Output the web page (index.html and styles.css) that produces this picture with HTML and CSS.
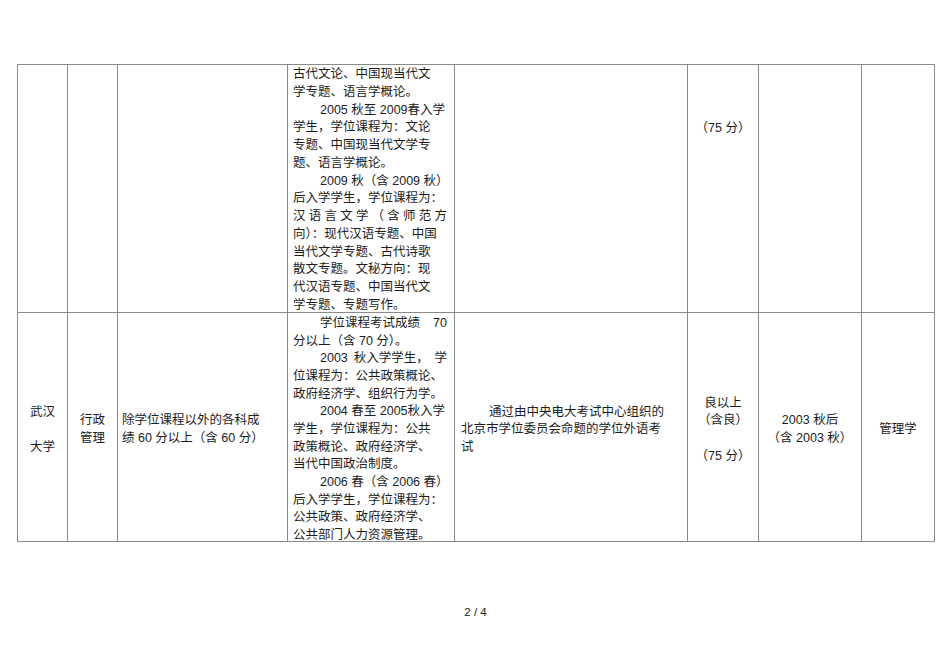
FILE: index.html
```html
<!DOCTYPE html>
<html lang="zh">
<head>
<meta charset="utf-8">
<link rel="stylesheet" href="styles.css">
</head>
<body>
<div class="page">
<table class="grid">
<colgroup>
<col class="c1"><col class="c2"><col class="c3"><col class="c4"><col class="c5"><col class="c6"><col class="c7"><col class="c8">
</colgroup>
<tr class="r1">
<td></td>
<td></td>
<td></td>
<td class="courses top">
<div class="body b1">
<div class="ln">古代文论、中国现当代文</div>
<div class="ln">学专题、语言学概论。</div>
<div class="ln in">2005 秋至 2009春入学</div>
<div class="ln">学生，学位课程为：文论</div>
<div class="ln">专题、中国现当代文学专</div>
<div class="ln">题、语言学概论。</div>
<div class="ln in">2009 秋（含 2009 秋）</div>
<div class="ln">后入学学生，学位课程为：</div>
<div class="ln j">汉语言文学（含师范方</div>
<div class="ln">向）：现代汉语专题、中国</div>
<div class="ln">当代文学专题、古代诗歌</div>
<div class="ln">散文专题。文秘方向：现</div>
<div class="ln">代汉语专题、中国当代文</div>
<div class="ln">学专题、专题写作。</div>
</div>
</td>
<td></td>
<td class="center score-top"><div class="ln">（75 分）</div></td>
<td></td>
<td></td>
</tr>
<tr class="r2">
<td class="center mid"><div class="ln">武汉</div><div class="ln">&nbsp;</div><div class="ln">大学</div></td>
<td class="center mid"><div class="ln">行政</div><div class="ln">管理</div></td>
<td class="left mid"><div class="ln">除学位课程以外的各科成</div><div class="ln">绩 60 分以上（含 60 分）</div></td>
<td class="courses top">
<div class="body b2">
<div class="ln in spread"><span>学位课程考试成绩</span><span>70</span></div>
<div class="ln">分以上（含 70 分）。</div>
<div class="ln in spread"><span>2003</span><span>秋入学学生，</span><span>学</span></div>
<div class="ln">位课程为：公共政策概论、</div>
<div class="ln">政府经济学、组织行为学。</div>
<div class="ln in">2004 春至 2005秋入学</div>
<div class="ln">学生，学位课程为：公共</div>
<div class="ln">政策概论、政府经济学、</div>
<div class="ln">当代中国政治制度。</div>
<div class="ln in">2006 春（含 2006 春）</div>
<div class="ln">后入学学生，学位课程为：</div>
<div class="ln">公共政策、政府经济学、</div>
<div class="ln">公共部门人力资源管理。</div>
</div>
</td>
<td class="left exam mid"><div class="ln in2">通过由中央电大考试中心组织的</div><div class="ln">北京市学位委员会命题的学位外语考</div><div class="ln">试</div></td>
<td class="center mid"><div class="ln">良以上</div><div class="ln">（含良）</div><div class="ln">&nbsp;</div><div class="ln">（75 分）</div></td>
<td class="center mid"><div class="ln">2003 秋后</div><div class="ln">（含 2003 秋）</div></td>
<td class="center mid"><div class="ln">管理学</div></td>
</tr>
</table>
<div class="pageno">2 / 4</div>
</div>
</body>
</html>
```
FILE: styles.css
```css
html, body {
  margin: 0;
  padding: 0;
  background: #ffffff;
}
body {
  font-family: "Liberation Sans", "Noto Sans CJK SC", sans-serif;
  color: #1c1c1c;
  font-size: 12.5px;
}
.page {
  width: 950px;
  height: 672px;
  padding: 64px 0 0 17px;
  box-sizing: border-box;
}
.grid {
  border-collapse: collapse;
  table-layout: fixed;
  width: 917px;
}
.grid td {
  border: 1px solid #8a8a8a;
  padding: 0 5px;
  vertical-align: middle;
  line-height: 17.6px;
  overflow: visible;
}
.c1 { width: 50px; }
.c2 { width: 50px; }
.c3 { width: 170px; }
.c4 { width: 167px; }
.c5 { width: 233px; }
.c6 { width: 71px; }
.c7 { width: 103px; }
.c8 { width: 73px; }
.r1 { height: 248px; }
.r2 { height: 229px; }
.ln {
  white-space: nowrap;
}
.grid td.courses {
  padding: 0 7px 0 5px;
}
.grid td.top {
  vertical-align: top;
}
.body.b1 {
  line-height: 17.77px;
  margin-top: 1px;
  margin-bottom: -8px;
}
.body.b2 {
  line-height: 17.67px;
  margin-top: 2px;
  margin-bottom: -10px;
}
.grid td.mid {
  padding-top: 6px;
}
.in {
  padding-left: 27px;
}
.in2 {
  padding-left: 28px;
}
.j {
  white-space: normal;
  text-align: justify;
  text-align-last: justify;
}
.spread {
  display: flex;
  justify-content: space-between;
}
.center {
  text-align: center;
}
.left {
  text-align: left;
}
.grid td.left {
  padding-left: 4px;
}
.grid td.exam {
  padding-left: 6px;
}
.grid td.score-top {
  vertical-align: top;
  padding-top: 55px;
}
.pageno {
  margin-top: 63px;
  width: 917px;
  text-align: center;
  font-size: 11.5px;
  line-height: 14px;
  color: #222;
}
```
